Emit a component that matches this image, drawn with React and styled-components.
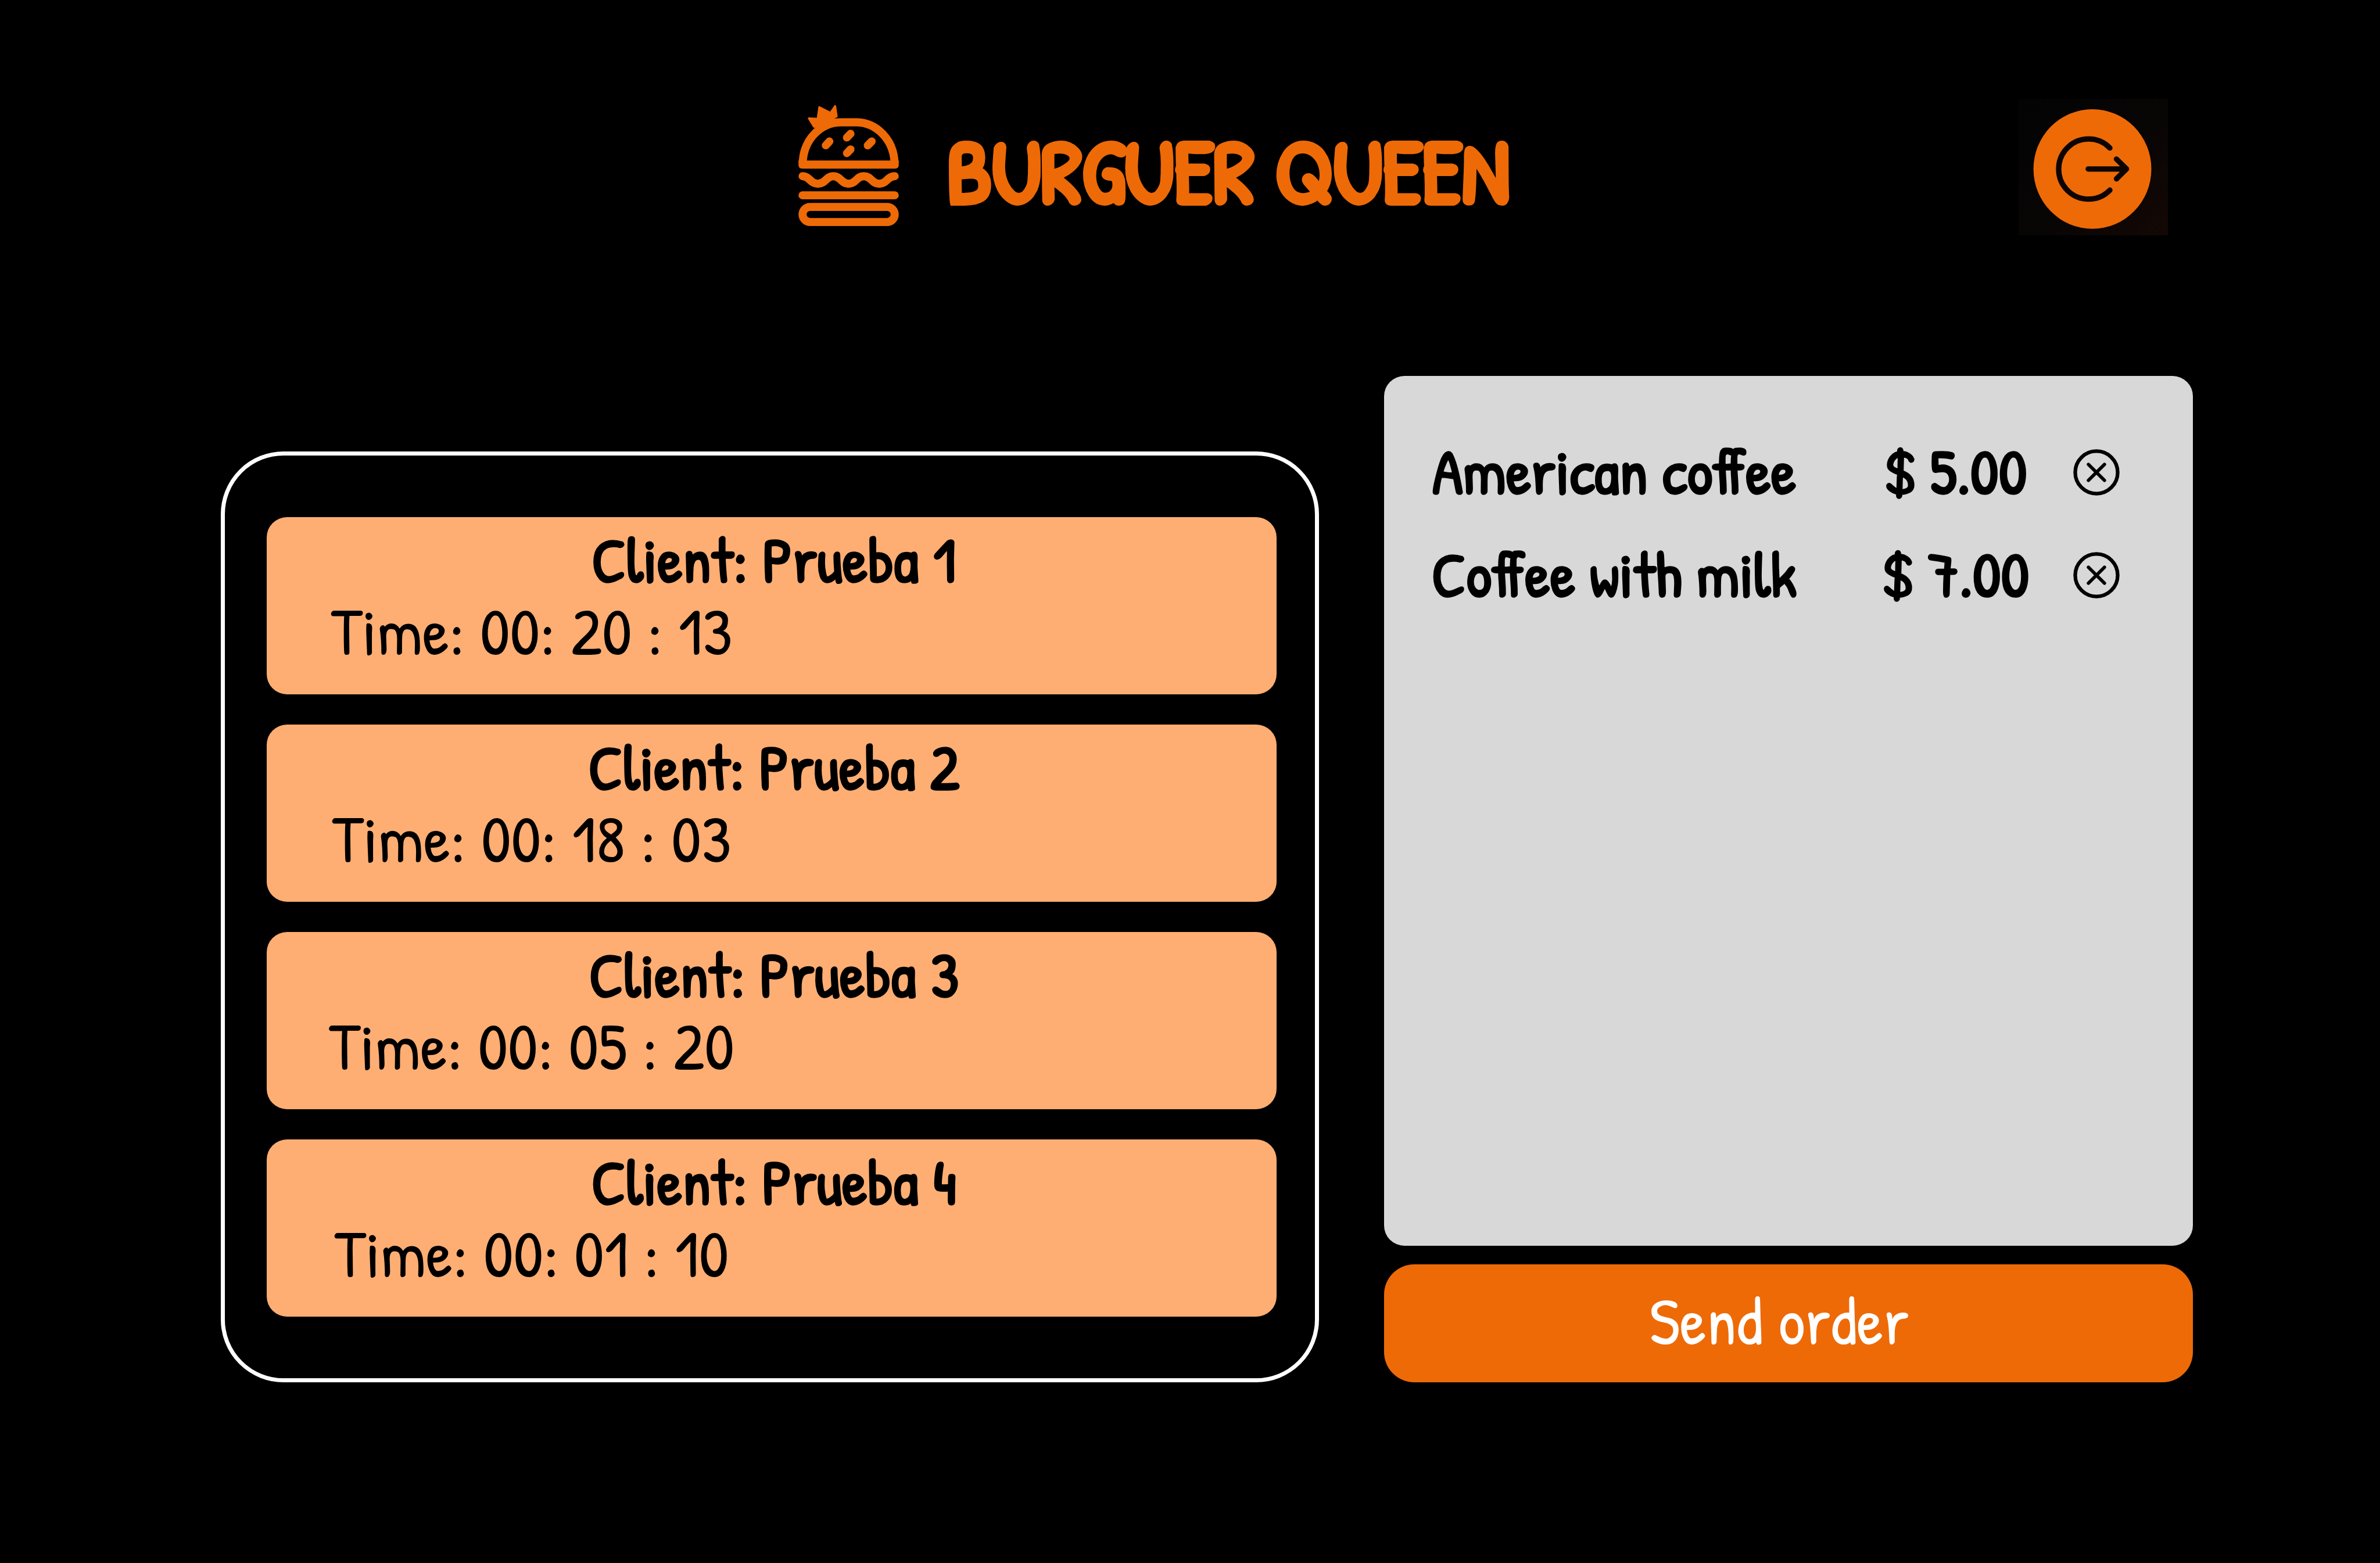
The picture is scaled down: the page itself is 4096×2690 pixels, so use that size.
import React from 'react';
import styled, { createGlobalStyle } from 'styled-components';

const ORANGE = '#ee6a07';
const PEACH = '#ffae73';

const GlobalStyle = createGlobalStyle`
  *, *::before, *::after { box-sizing: border-box; }
  body {
    margin: 0;
    background: #000;
    font-family: "Patrick Hand", "Roboto Condensed", sans-serif;
  }
  h1, h2, p, ul { margin: 0; padding: 0; }
  button { font: inherit; border: 0; cursor: pointer; }
`;

const Page = styled.div`
  min-height: 100vh;
  background: #000;
`;

const Header = styled.header`
  display: grid;
  grid-template-columns: 1fr auto 1fr;
  align-items: center;
  padding: 170px 365px 0 241px;
`;

const Brand = styled.div`
  grid-column: 2;
  display: flex;
  align-items: center;
  gap: 82px;
  padding-bottom: 6px;
`;

const BurgerIcon = styled.svg`
  width: 173px;
  height: 208px;
  flex: none;
  fill: none;
  stroke: ${ORANGE};
  stroke-linecap: round;
  stroke-linejoin: round;
`;

const BrandName = styled.h1`
  padding-top: 16px;
  color: ${ORANGE};
  font-size: 154px;
  line-height: 208px;
  font-weight: 700;
  white-space: nowrap;
  -webkit-text-stroke: 5px ${ORANGE};
`;

const LogoutButton = styled.button`
  grid-column: 3;
  justify-self: end;
  width: 257px;
  height: 235px;
  padding: 0;
  background: linear-gradient(135deg, #030303 0%, #080505 55%, #140804 100%);
`;

const LogoutIcon = styled.svg`
  display: block;
  width: 100%;
  height: 100%;
`;

const Main = styled.main`
  display: grid;
  grid-template-columns: 1890fr 1392fr;
  align-items: end;
  gap: 112px;
  padding: 242px 322px 120px 380px;
`;

const OrdersPanel = styled.ul`
  display: flex;
  flex-direction: column;
  gap: 52px;
  padding: 106px 66px 106px 72px;
  border: 7px solid #fff;
  border-radius: 108px;
  list-style: none;
`;

const OrderCard = styled.li`
  padding: 10px 0 49px;
  border-radius: 35px;
  background: ${PEACH};
  color: #000;
`;

const ClientName = styled.h2`
  padding-left: 8px;
  font-size: 109px;
  line-height: 124px;
  font-weight: 700;
  text-align: center;
`;

const Elapsed = styled.p`
  width: 700px;
  margin-left: 106px;
  font-size: 115px;
  line-height: 122px;
  text-align: center;
  white-space: nowrap;
`;

const Checkout = styled.section`
  display: flex;
  flex-direction: column;
  gap: 32px;
`;

const Ticket = styled.ul`
  display: flex;
  flex-direction: column;
  gap: 47px;
  min-height: 1497px;
  padding: 98px 126px 98px 12px;
  border-radius: 35px;
  background: #d8d8d8;
  list-style: none;
`;

const TicketLine = styled.li`
  display: grid;
  grid-template-columns: 1fr 406px 80px;
  align-items: center;
  color: #000;
  font-size: 109px;
  line-height: 130px;
  font-weight: 700;
  text-align: center;
  white-space: nowrap;
`;

const RemoveButton = styled.button`
  width: 80px;
  height: 80px;
  margin-top: 6px;
  padding: 0;
  background: none;
`;

const RemoveIcon = styled.svg`
  display: block;
  width: 80px;
  height: 80px;
  fill: none;
  stroke: #000;
  stroke-linecap: round;
`;

const SendButton = styled.button`
  height: 203px;
  padding: 0 32px 12px 0;
  border-radius: 52px;
  background: ${ORANGE};
  color: #fff;
  && { font-size: 115px; }
`;

const orders = [
  { client: 'Prueba 1', time: '00: 20 : 13' },
  { client: 'Prueba 2', time: '00: 18 : 03' },
  { client: 'Prueba 3', time: '00: 05 : 20' },
  { client: 'Prueba 4', time: '00: 01 : 10' },
];

const items = [
  { name: 'American coffee', price: '$ 5.00' },
  { name: 'Coffee with milk', price: '$ 7.00' },
];

function Burger() {
  return (
    <BurgerIcon viewBox="72 87 597 720" aria-hidden="true">
      {/* crown */}
      <path
        d="M134 166 L186 168 L196 99 L262 133 L290 93 L299 153 L240 190 L190 212 L165 216 Z"
        fill={ORANGE}
        strokeWidth="12"
      />
      {/* top bun */}
      <path d="M97 430 C103 283 211 189 325 189 H415 C532 189 638 287 644 430" strokeWidth="48" strokeLinecap="butt" />
      <path
        d="M72 417 H669 V443 Q669 465 647 465 H94 Q72 465 72 443 Z"
        fill={ORANGE}
        stroke="none"
      />
      {/* seeds */}
      <path d="M234 327 L256 303 M360 280 L382 257 M360 373 L382 350 M484 327 L508 303" strokeWidth="47" />
      {/* lettuce */}
      <path
        d="M96 510 C140 510 140 555 188 555 C235 555 235 510 279 510 C325 510 325 555 370 555 C416 555 416 510 461 510 C507 510 507 555 553 555 C600 555 600 510 645 510"
        strokeWidth="48"
      />
      {/* patty */}
      <path d="M96 624 H645" strokeWidth="48" />
      {/* bottom bun */}
      <rect x="96" y="693" width="549" height="90" rx="45" strokeWidth="48" />
    </BurgerIcon>
  );
}

function Logout() {
  return (
    <LogoutIcon viewBox="72 48 888 813" aria-hidden="true">
      <ellipse cx="511" cy="466" rx="351" ry="356" fill={ORANGE} />
      <g fill="none" stroke="#0d0504" strokeWidth="32" strokeLinecap="round" strokeLinejoin="round">
        <path d="M615 341 A178 179 0 1 0 615 592" />
        <path d="M486 466 H712" />
        <path d="M654 407 L714 466 L654 525" />
        <path d="M690 456 L700 466 L690 476" />
      </g>
    </LogoutIcon>
  );
}

export default function App() {
  return (
    <>
      <GlobalStyle />
      <Page>
        <Header>
          <Brand>
            <Burger />
            <BrandName>BURGUER QUEEN</BrandName>
          </Brand>
          <LogoutButton type="button" aria-label="Log out">
            <Logout />
          </LogoutButton>
        </Header>
        <Main>
          <OrdersPanel>
            {orders.map((order) => (
              <OrderCard key={order.client}>
                <ClientName>Client: {order.client}</ClientName>
                <Elapsed>Time: {order.time}</Elapsed>
              </OrderCard>
            ))}
          </OrdersPanel>
          <Checkout>
            <Ticket>
              {items.map((item) => (
                <TicketLine key={item.name}>
                  <span>{item.name}</span>
                  <span>{item.price}</span>
                  <RemoveButton type="button" aria-label={`Remove ${item.name}`}>
                    <RemoveIcon viewBox="0 0 278 278" aria-hidden="true">
                      <circle cx="139" cy="139" r="127" strokeWidth="22" />
                      <path d="M91 91 L187 187 M187 91 L91 187" strokeWidth="20" />
                    </RemoveIcon>
                  </RemoveButton>
                </TicketLine>
              ))}
            </Ticket>
            <SendButton type="button">Send order</SendButton>
          </Checkout>
        </Main>
      </Page>
    </>
  );
}
